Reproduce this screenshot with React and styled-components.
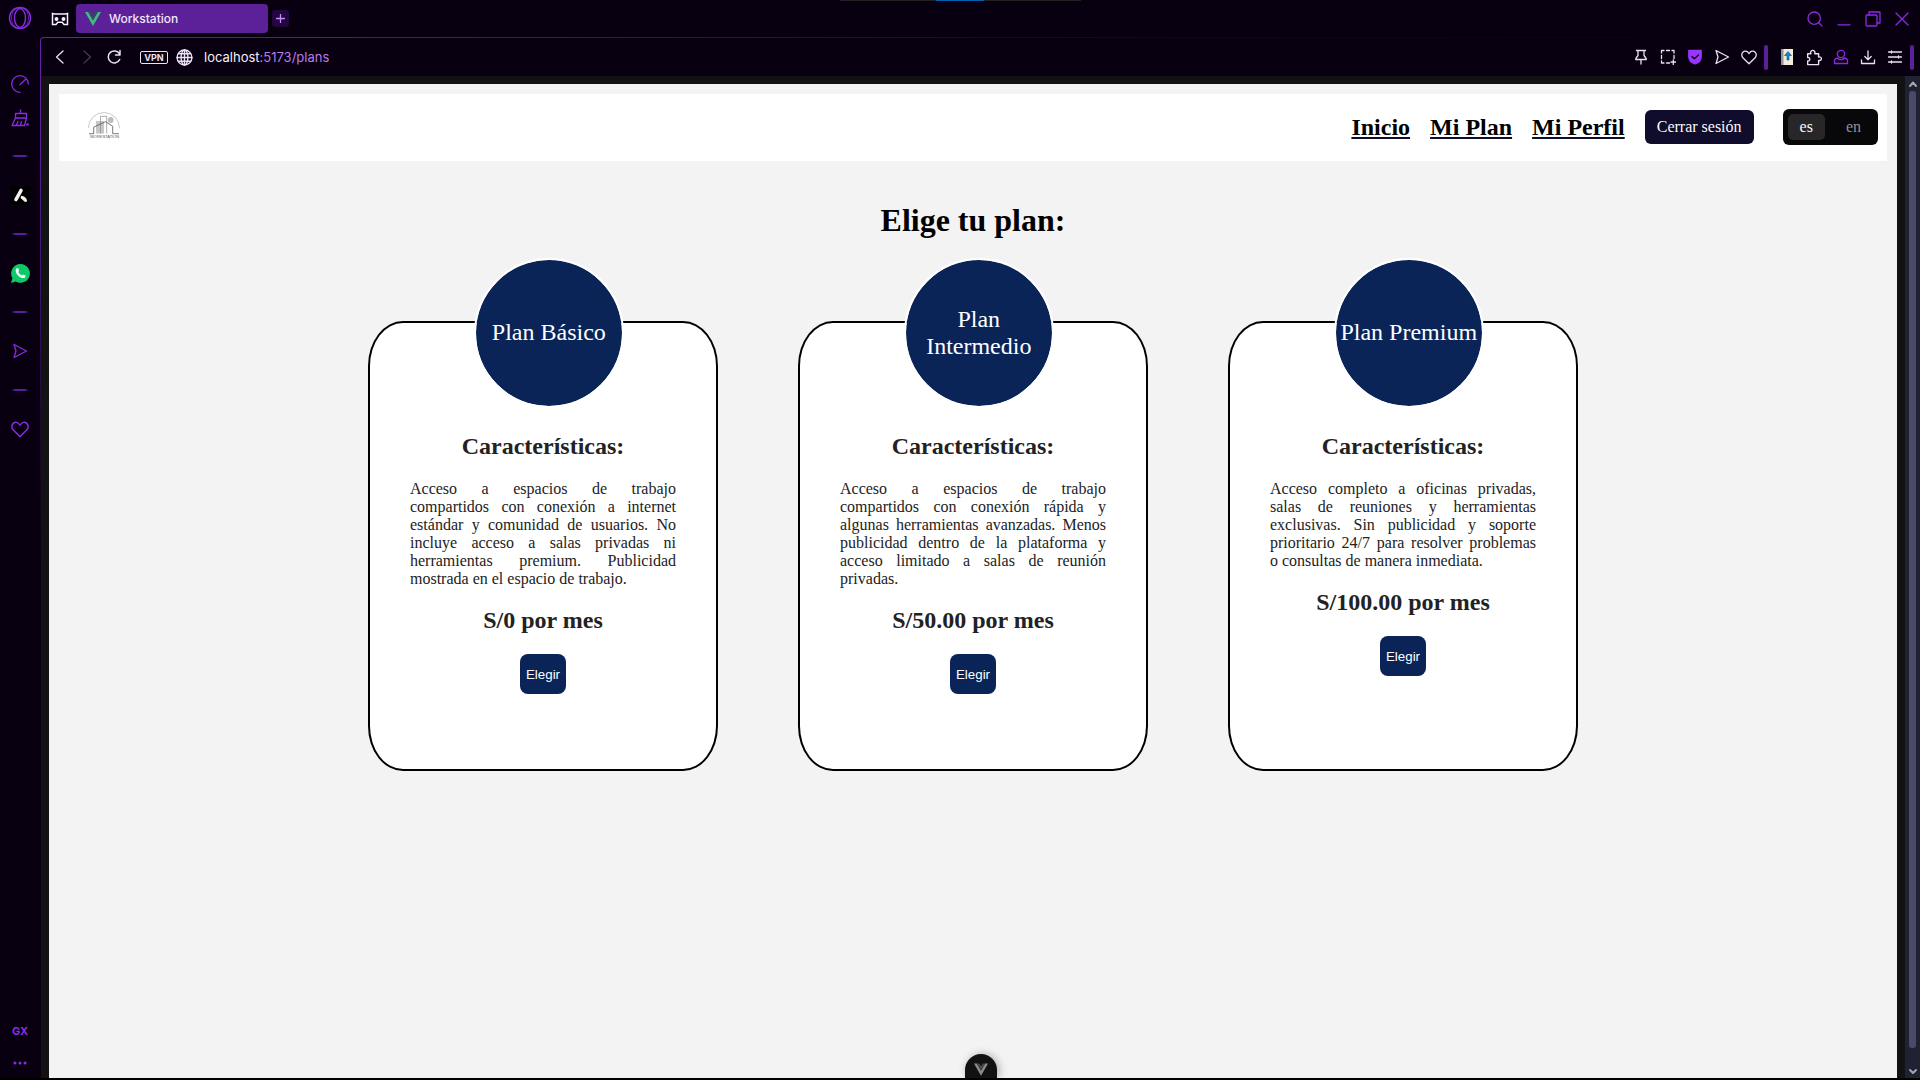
import React, { useState } from "react";
import styled, { createGlobalStyle, css } from "styled-components";

const GlobalStyle = createGlobalStyle`
  * { box-sizing: border-box; }
  html, body { margin: 0; padding: 0; background: #000; }
  button { cursor: pointer; }
`;

const violet = "#8a2be2";
const chrome = "#080010";
const navy = "#0a2458";

const Browser = styled.div`
  position: relative;
  display: flex;
  height: 100vh;
  padding-bottom: 2px;
  background: #000;
  font-family: Inter, "Liberation Sans", sans-serif;
  overflow: hidden;
`;

const Sidebar = styled.nav`
  display: flex;
  flex-direction: column;
  align-items: center;
  flex: 0 0 40px;
  background: ${chrome};
  color: ${violet};
`;

const IconButton = styled.button`
  display: flex;
  align-items: center;
  justify-content: center;
  flex: none;
  width: ${(p) => p.$w || 40}px;
  height: ${(p) => p.$h || 36}px;
  padding: 0;
  border: 0;
  background: none;
  color: ${(p) => p.$color || "inherit"};
  font: 700 11px Inter, "Liberation Sans", sans-serif;
`;

const SideGroup = styled.div`
  display: flex;
  flex-direction: column;
  margin-top: 31px;
`;

const SideDivider = styled.hr`
  width: 18px;
  height: 2px;
  margin: 20px 11px;
  border: 0;
  background: linear-gradient(90deg, transparent, #5a1f9c 25%, #5a1f9c 75%, transparent);
`;

const AppTile = styled.span`
  display: flex;
  align-items: center;
  justify-content: center;
  width: 19px;
  height: 19px;
  border-radius: 3px;
  background: #000;
`;

const Spacer = styled.div`
  flex: 1;
`;

const Main = styled.div`
  display: flex;
  flex-direction: column;
  flex: 1;
  min-width: 0;
  background: ${chrome};
`;

const TabBar = styled.header`
  display: flex;
  align-items: center;
  flex: 0 0 37px;
  padding: 0 4px 0 6px;
`;

const Tab = styled.button`
  display: flex;
  align-items: center;
  gap: 8px;
  width: 192px;
  height: 29px;
  margin-left: 2px;
  padding: 0 9px;
  border: 0;
  border-radius: 4px;
  background: #5c2198;
  color: #f1e6fb;
  font: 500 12px Inter, "Liberation Sans", sans-serif;
`;

const NewTab = styled.button`
  display: flex;
  align-items: center;
  justify-content: center;
  width: 17px;
  height: 17px;
  margin-left: 4px;
  padding: 0;
  border: 0;
  border-radius: 3px;
  background: #230540;
  color: #c48cf5;
`;

const Window = styled.div`
  display: flex;
  flex-direction: column;
  flex: 1;
  min-height: 0;
  padding: 1px 0 0 1px;
  border-top-left-radius: 4px;
  background: linear-gradient(90deg, #6a22ac, #1c0638 50%, #0d0528 60%, ${chrome}) top / 100% 5px no-repeat,
    linear-gradient(#6a22ac, #5a1c96 120px, #1a0530 400px, ${chrome} 520px);
`;

const Toolbar = styled.div`
  display: flex;
  align-items: center;
  flex: 0 0 38px;
  padding: 0 6px 0 5px;
  border-top-left-radius: 3px;
  background: ${chrome};
  color: #ece0f5;
`;

const Vpn = styled.button`
  width: 28px;
  height: 13px;
  margin: 0 8px 0 13px;
  padding: 0;
  border: 1px solid #ece0f5;
  border-radius: 2px;
  background: none;
  color: #ece0f5;
  font: 700 9px/11px Inter, "Liberation Sans", sans-serif;
`;

const Address = styled.a`
  margin-left: 11px;
  color: #b67bea;
  font-size: 13px;
  line-height: 20px;
  text-decoration: none;
`;

const Host = styled.span`
  color: #f7effc;
`;

const ToolMark = styled.span`
  width: 4px;
  height: 25px;
  margin-left: 2px;
  margin-right: ${(p) => (p.$last ? 0 : 5)}px;
  border-radius: 2px;
  background: #5c2198;
`;

const Viewport = styled.div`
  display: flex;
  flex: 1;
  min-height: 0;
  background: #121212;
`;

const Page = styled.div`
  position: relative;
  display: flex;
  flex-direction: column;
  flex: 1;
  margin: 8px 8px 0;
  padding: 10px;
  background: #f3f3f3;
  color: #000;
  font-family: "Liberation Serif", "Times New Roman", serif;
  font-size: 16px;
  overflow: hidden;
`;

const Scrollbar = styled.div`
  display: flex;
  flex-direction: column;
  align-items: center;
  flex: 0 0 15px;
  background: #1f2232;
  color: #a5a5a5;
`;

const Thumb = styled.div`
  flex: 1;
  width: 7px;
  border-radius: 3px;
  background: #4a4b66;
`;

const ArrowCell = styled.span`
  display: flex;
  align-items: ${(p) => (p.$end ? "flex-end" : "center")};
  height: ${(p) => p.$h}px;
  padding-bottom: ${(p) => (p.$end ? 3 : 0)}px;
`;

const NavBar = styled.nav`
  display: flex;
  align-items: center;
  justify-content: space-between;
  height: 67px;
  padding: 0 9px 1px 29px;
  background: #fff;
`;

const NavLinks = styled.div`
  display: flex;
  align-items: center;
  gap: 20px;
`;

const NavLink = styled.a`
  color: #000;
  font-size: 24px;
  line-height: 28px;
  font-weight: 700;
  text-decoration: underline;
  text-decoration-color: #0f0c2c;
`;

const Logout = styled.button`
  height: 34px;
  padding: 0 12px;
  border: 0;
  border-radius: 6px;
  background: #0f0c2c;
  color: #fafafa;
  font: 16px "Liberation Serif", "Times New Roman", serif;
`;

const Languages = styled.div`
  display: flex;
  gap: 9px;
  margin-left: 9px;
  padding: 5px;
  border-radius: 6px;
  background: #08080a;
`;

const Language = styled.button`
  height: 26px;
  padding: 0 12px;
  border: 0;
  border-radius: 5px;
  background: ${(p) => (p.$active ? "#27272a" : "transparent")};
  color: ${(p) => (p.$active ? "#fafafa" : "#8f8f98")};
  font: 16px "Liberation Serif", "Times New Roman", serif;
`;

const Title = styled.h1`
  margin: 41px 0 82px;
  font-size: 32px;
  line-height: 37px;
  text-align: center;
`;

const Plans = styled.section`
  display: flex;
  justify-content: center;
  gap: 80px;
`;

const Card = styled.article`
  position: relative;
  display: flex;
  flex-direction: column;
  align-items: center;
  width: 350px;
  min-height: 450px;
  padding: 110px 40px 0;
  border: 2px solid #000;
  border-radius: 10%;
  background: #fff;
  color: #222;
`;

const Badge = styled.h2`
  position: absolute;
  top: -65px;
  left: 30%;
  display: flex;
  align-items: center;
  justify-content: center;
  width: 150px;
  height: 150px;
  margin: 0;
  padding-bottom: 1px;
  border: 2px solid #fff;
  border-radius: 50%;
  background: ${navy};
  background-clip: padding-box;
  color: #fff;
  font-size: 24px;
  line-height: 27px;
  font-weight: 400;
  text-align: center;
`;

const strong = css`
  margin: 0;
  font-size: 24px;
  line-height: 27px;
  font-weight: 700;
`;

const Subtitle = styled.h3`
  ${strong}
`;

const Price = styled.p`
  ${strong}
`;

const Description = styled.p`
  margin: 20px 0 19px;
  line-height: 18px;
  text-align: justify;
`;

const Choose = styled.button`
  height: 40px;
  margin-top: 20px;
  padding: 0 6px;
  border: 0;
  border-radius: 8px;
  background: ${navy};
  color: #fff;
  font-family: "Liberation Sans", Arial, sans-serif;
`;

const DevTools = styled.button`
  position: absolute;
  bottom: 0;
  left: calc(50% - 8px);
  display: flex;
  align-items: flex-end;
  justify-content: center;
  width: 32px;
  height: 24px;
  padding: 0 0 2px;
  border: 0;
  border-radius: 16px 16px 0 0;
  background: #111;
  box-shadow: 2px 0 8px rgba(0, 0, 0, 0.3);
`;

const TopStrip = styled.div`
  position: absolute;
  top: 0;
  left: calc(50% - 120px);
  width: 241px;
  height: 1px;
  background: linear-gradient(90deg, #222 96px, #0063b1 96px, #0063b1 144px, #222 144px);
`;

function Icon({ size = 16, width = 1.3, box = 16, children }) {
  return (
    <svg
      width={size}
      height={size}
      viewBox={`0 0 ${box} ${box}`}
      fill="none"
      stroke="currentColor"
      strokeWidth={width}
      strokeLinecap="round"
      strokeLinejoin="round"
      aria-hidden="true"
    >
      {children}
    </svg>
  );
}

const Heart = () => <path d="M8 14.8 1.9 8.700C.3 7 .4 4.400 2 3c1.700-1.500 4.200-1.100 5.300.6L8 4.600l.7-1C9.800 1.900 12.300 1.500 14 3c1.600 1.400 1.700 4 .1 5.700Z" />;
const Send = () => <path d="M2 1.500 14.500 8 2 14.500 4 8Z" />;

const VueMark = ({ w, h, outer, inner }) => (
  <svg width={w} height={h} viewBox="0 0 16 14" aria-hidden="true">
    <path d="M0 0h3.200L8 8.300 12.800 0H16L8 14Z" fill={outer} />
    <path d="M3.200 0H6l2 3.400L10 0h2.800L8 8.300Z" fill={inner} />
  </svg>
);

const CompanyLogo = () => (
  <svg width="32" height="30" viewBox="0 0 32 30" role="img" aria-label="Workstation" fill="none">
    <path d="M.5 16A15.500 15.500 0 0 1 31.500 16" stroke="#bbb" strokeWidth=".8" />
    <rect x="8" y="9" width="8" height="12.500" fill="#c6c6c2" />
    <circle cx="22.700" cy="8" r="2.900" fill="#bcbcbc" />
    <path d="M12.500 9V4.300h6.200V21.500M12.500 9v12.500" stroke="#8a8a8a" strokeWidth=".7" />
    <path d="M1 21.700h4.700v-6.500L17.500 9.700l7.200 4.500v7.500H31" stroke="#555" strokeWidth=".8" />
    <text x="2" y="26" fontSize="4" fill="#555" fontFamily="Liberation Sans, sans-serif">WORKSTATION</text>
  </svg>
);

const plans = [
  {
    name: "Plan Básico",
    text: "Acceso a espacios de trabajo compartidos con conexión a internet estándar y comunidad de usuarios. No incluye acceso a salas privadas ni herramientas premium. Publicidad mostrada en el espacio de trabajo.",
    price: "S/0 por mes",
  },
  {
    name: "Plan Intermedio",
    text: "Acceso a espacios de trabajo compartidos con conexión rápida y algunas herramientas avanzadas. Menos publicidad dentro de la plataforma y acceso limitado a salas de reunión privadas.",
    price: "S/50.00 por mes",
  },
  {
    name: "Plan Premium",
    text: "Acceso completo a oficinas privadas, salas de reuniones y herramientas exclusivas. Sin publicidad y soporte prioritario 24/7 para resolver problemas o consultas de manera inmediata.",
    price: "S/100.00 por mes",
  },
];

function SideBar() {
  return (
    <Sidebar>
      <IconButton aria-label="Opera">
        <Icon size={24} box={24} width={1.4}>
          <circle cx="12" cy="12" r="10.500" />
          <ellipse cx="12" cy="12" rx="5.500" ry="9.500" />
          <path d="M8 2.500C4.500 5 3.500 9 3.500 12s1 7 4.500 9.500M16 2.500c3.500 2.500 4.500 6.500 4.500 9.500s-1 7-4.500 9.500" strokeWidth=".7" />
        </Icon>
      </IconButton>
      <SideGroup>
        <IconButton $h={34} aria-label="GX Control">
          <Icon size={18} box={18}>
            <path d="M9 17.300A8.300 8.300 0 1 1 17.300 9M9 9.500l5.500-5" />
          </Icon>
        </IconButton>
        <IconButton $h={34} aria-label="GX Cleaner">
          <Icon size={18} box={18}>
            <path d="M9.500 1v3.500M4.500 4.500h11V9h-11ZM4.500 9 1 16.500h12.500L15.500 9M5.500 16l1.500-3.500M9.500 16l1-3.500" />
            <circle cx="16.500" cy="15.500" r="1.300" fill="currentColor" stroke="none" />
          </Icon>
        </IconButton>
        <SideDivider />
        <IconButton aria-label="Aria">
          <AppTile>
            <svg width="15" height="15" viewBox="0 0 15 15" aria-hidden="true">
              <path d="m3 11.500 5-9" stroke="#f2f2f2" strokeWidth="3.600" strokeLinecap="round" />
              <path d="M8.300 7.800c3 .2 5.200 2.300 5.700 4.600.1 1.500-1.600 1.900-2.500 1L7.500 10Z" fill="#f2f2f2" />
            </svg>
          </AppTile>
        </IconButton>
        <SideDivider />
        <IconButton aria-label="WhatsApp">
          <svg width="19" height="19" viewBox="0 0 19 19" aria-hidden="true">
            <path d="M9.500 0a9.400 9.400 0 1 1-4.800 17.500L0 19l1.500-4.800A9.400 9.400 0 0 1 9.500 0Z" fill="#0fc969" />
            <path d="M5.500 4.500c1-.9 1.700-.5 2 .4l.6 1.500c.1.500-.8 1.200-.8 1.500.6 1.500 1.900 2.800 3.500 3.500.4 0 1-1.100 1.500-1l1.900.9c.6.300.4 1.500-.1 2.100-1.400 1.500-4.600.4-6.800-1.700S3.700 6.200 5.500 4.500Z" fill="#fff" />
          </svg>
        </IconButton>
        <SideDivider />
        <IconButton aria-label="My Flow"><Icon><Send /></Icon></IconButton>
        <SideDivider />
        <IconButton aria-label="Pinboards"><Icon size={18}><Heart /></Icon></IconButton>
      </SideGroup>
      <Spacer />
      <IconButton $h={34}>GX</IconButton>
      <IconButton $h={30} aria-label="Más">
        <svg width="14" height="4" viewBox="0 0 14 4" fill="currentColor" aria-hidden="true">
          <circle cx="2" cy="2" r="1.500" /><circle cx="7" cy="2" r="1.500" /><circle cx="12" cy="2" r="1.500" />
        </svg>
      </IconButton>
    </Sidebar>
  );
}

function TabStrip() {
  return (
    <TabBar>
      <IconButton $w={28} $color="#f5f0fa" aria-label="GX Corner">
        <Icon size={18} box={18} width={1.5}>
          <path d="M1.500 3.500l2 .5h11l2-.5v11h-3.500l-1.800-2.300H6.800L5 14.500H1.500Z" strokeLinejoin="miter" />
          <circle cx="5.500" cy="9" r="1.200" fill="currentColor" />
          <circle cx="12.500" cy="9" r="1.200" fill="currentColor" />
        </Icon>
      </IconButton>
      <Tab>
        <VueMark w={16} h={14} outer="#41b883" inner="#35495e" />
        Workstation
      </Tab>
      <NewTab aria-label="Nueva pestaña">
        <Icon size={9} box={9}><path d="M4.500.5v8M.5 4.500h8" /></Icon>
      </NewTab>
      <Spacer />
      <IconButton $w={29} $color={violet} aria-label="Buscar">
        <Icon><circle cx="7.200" cy="7.200" r="6.200" /><path d="m11.700 11.700 3.300 3.300" /></Icon>
      </IconButton>
      <IconButton $w={29} $color={violet} aria-label="Minimizar">
        <Icon><path d="M2 13.800h12" /></Icon>
      </IconButton>
      <IconButton $w={29} $color={violet} aria-label="Restaurar">
        <Icon><rect x="1" y="4" width="11" height="11" rx="1" /><path d="M4 4V1h11v11h-3" /></Icon>
      </IconButton>
      <IconButton $w={29} $color={violet} aria-label="Cerrar">
        <Icon><path d="m2 2 12 12M14 2 2 14" /></Icon>
      </IconButton>
    </TabBar>
  );
}

function AddressBar() {
  return (
    <Toolbar>
      <IconButton $w={27} aria-label="Atrás"><Icon><path d="M11 2 4.500 8l6.500 6" /></Icon></IconButton>
      <IconButton $w={27} $color="#463a50" aria-label="Adelante"><Icon><path d="m5 2 6.500 6L5 14" /></Icon></IconButton>
      <IconButton $w={27} aria-label="Recargar">
        <Icon width={1.5}><path d="M13.700 10.500A6 6 0 1 1 13.500 5M14 1.500V6H9.500" /></Icon>
      </IconButton>
      <Vpn>VPN</Vpn>
      <Icon size={17}>
        <circle cx="8" cy="8" r="7" />
        <ellipse cx="8" cy="8" rx="3.200" ry="7" />
        <path d="M1 8h14M8 1v14M2.500 4.500h11M2.500 11.500h11" />
      </Icon>
      <Address href="#plans"><Host>localhost</Host>:5173/plans</Address>
      <Spacer />
      <IconButton $w={27} aria-label="Fijar">
        <Icon><path d="M3.500 1.500h9M5 1.500v5L2.800 9.500v1h10.400v-1L11 6.500v-5M8 10.500V15" /></Icon>
      </IconButton>
      <IconButton $w={27} aria-label="Captura">
        <Icon>
          <path d="M1.500 4V1.500H4M6.500 1.500h3M12 1.500h2V4M14 6.500v3M1.500 6.500v3M1.500 12v2H4M6.500 14h3M11 13h4.500M13.300 11v4.500" />
        </Icon>
      </IconButton>
      <IconButton $w={27} $color="#9a35ff" aria-label="Bloqueador">
        <Icon>
          <path d="M1.800 1.500h12.400v6.300c0 3.700-2.500 6-6.200 7.200-3.700-1.200-6.200-3.500-6.200-7.200Z" fill="currentColor" />
          <path d="m5 7.500 2.300 2.200L11.500 6" stroke={chrome} />
        </Icon>
      </IconButton>
      <IconButton $w={27} aria-label="Enviar"><Icon><Send /></Icon></IconButton>
      <IconButton $w={27} aria-label="Favoritos"><Icon><Heart /></Icon></IconButton>
      <ToolMark />
      <IconButton $w={27} aria-label="Extensión">
        <svg width="14" height="16" viewBox="0 0 14 16" aria-hidden="true">
          <rect x="1" width="12" height="16" fill="#f2ecd8" />
          <path d="M1 0h2.500v16H1Z" fill="#8f969b" />
          <path d="M8 2.500 11.500 6.500H9V11H7V6.500H4.500Z" fill="#1686d9" stroke="#174a78" strokeWidth=".6" />
        </svg>
      </IconButton>
      <IconButton $w={27} aria-label="Extensiones">
        <Icon size={17}>
          <path d="M2.500 4.500h3C4.800 2.500 6 1.300 7.300 1.300S9.800 2.500 9.200 4.500h3.600v3c1.700-.4 2.600.5 2.600 1.600s-.9 2-2.600 1.600v4H2.500v-3.500c1.500.2 2-.7 2-1.600s-.5-1.800-2-1.600Z" />
        </Icon>
      </IconButton>
      <IconButton $w={27} $color={violet} aria-label="Perfil">
        <Icon><circle cx="8" cy="5" r="3.700" /><path d="M4.500 8.800C2.500 9.200 1.500 10 1.500 12v2.500h13V12c0-2-1-2.800-3-3.200-.7 2.500-6.300 2.500-7 0Z" /></Icon>
      </IconButton>
      <IconButton $w={27} aria-label="Descargas">
        <Icon><path d="M8 2v8.500M4.800 7.500 8 10.700l3.200-3.200M1.500 11v3.500h13V11" /></Icon>
      </IconButton>
      <IconButton $w={27} aria-label="Configuración">
        <Icon><path d="M1.500 3h13M1.500 8h13M1.500 13h13M4.500 2v2M11.500 7v2M4.500 12v2" /></Icon>
      </IconButton>
      <ToolMark $last />
    </Toolbar>
  );
}

function PlansPage() {
  const [lang, setLang] = useState("es");
  return (
    <Page>
      <NavBar>
        <CompanyLogo />
        <NavLinks>
          <NavLink href="#inicio">Inicio</NavLink>
          <NavLink href="#plan">Mi Plan</NavLink>
          <NavLink href="#perfil">Mi Perfil</NavLink>
          <Logout>Cerrar sesión</Logout>
          <Languages>
            {["es", "en"].map((code) => (
              <Language key={code} $active={lang === code} onClick={() => setLang(code)}>
                {code}
              </Language>
            ))}
          </Languages>
        </NavLinks>
      </NavBar>
      <Title>Elige tu plan:</Title>
      <Plans>
        {plans.map((plan) => (
          <Card key={plan.name}>
            <Badge>{plan.name}</Badge>
            <Subtitle>Características:</Subtitle>
            <Description>{plan.text}</Description>
            <Price>{plan.price}</Price>
            <Choose>Elegir</Choose>
          </Card>
        ))}
      </Plans>
      <DevTools aria-label="Vue DevTools">
        <VueMark w={14} h={13} outer="#8b8b8b" inner="#4a4a4a" />
      </DevTools>
    </Page>
  );
}

export default function App() {
  return (
    <>
      <GlobalStyle />
      <Browser>
        <SideBar />
        <Main>
          <TabStrip />
          <Window>
            <AddressBar />
            <Viewport>
              <PlansPage />
              <Scrollbar>
                <ArrowCell $h={15}>
                  <Icon size={8} box={8} width={2}><path d="m1 6 3-3.500L7 6" /></Icon>
                </ArrowCell>
                <Thumb />
                <ArrowCell $h={30} $end>
                  <Icon size={8} box={8} width={2}><path d="m1 3 3 3 3-3" /></Icon>
                </ArrowCell>
              </Scrollbar>
            </Viewport>
          </Window>
        </Main>
        <TopStrip />
      </Browser>
    </>
  );
}
